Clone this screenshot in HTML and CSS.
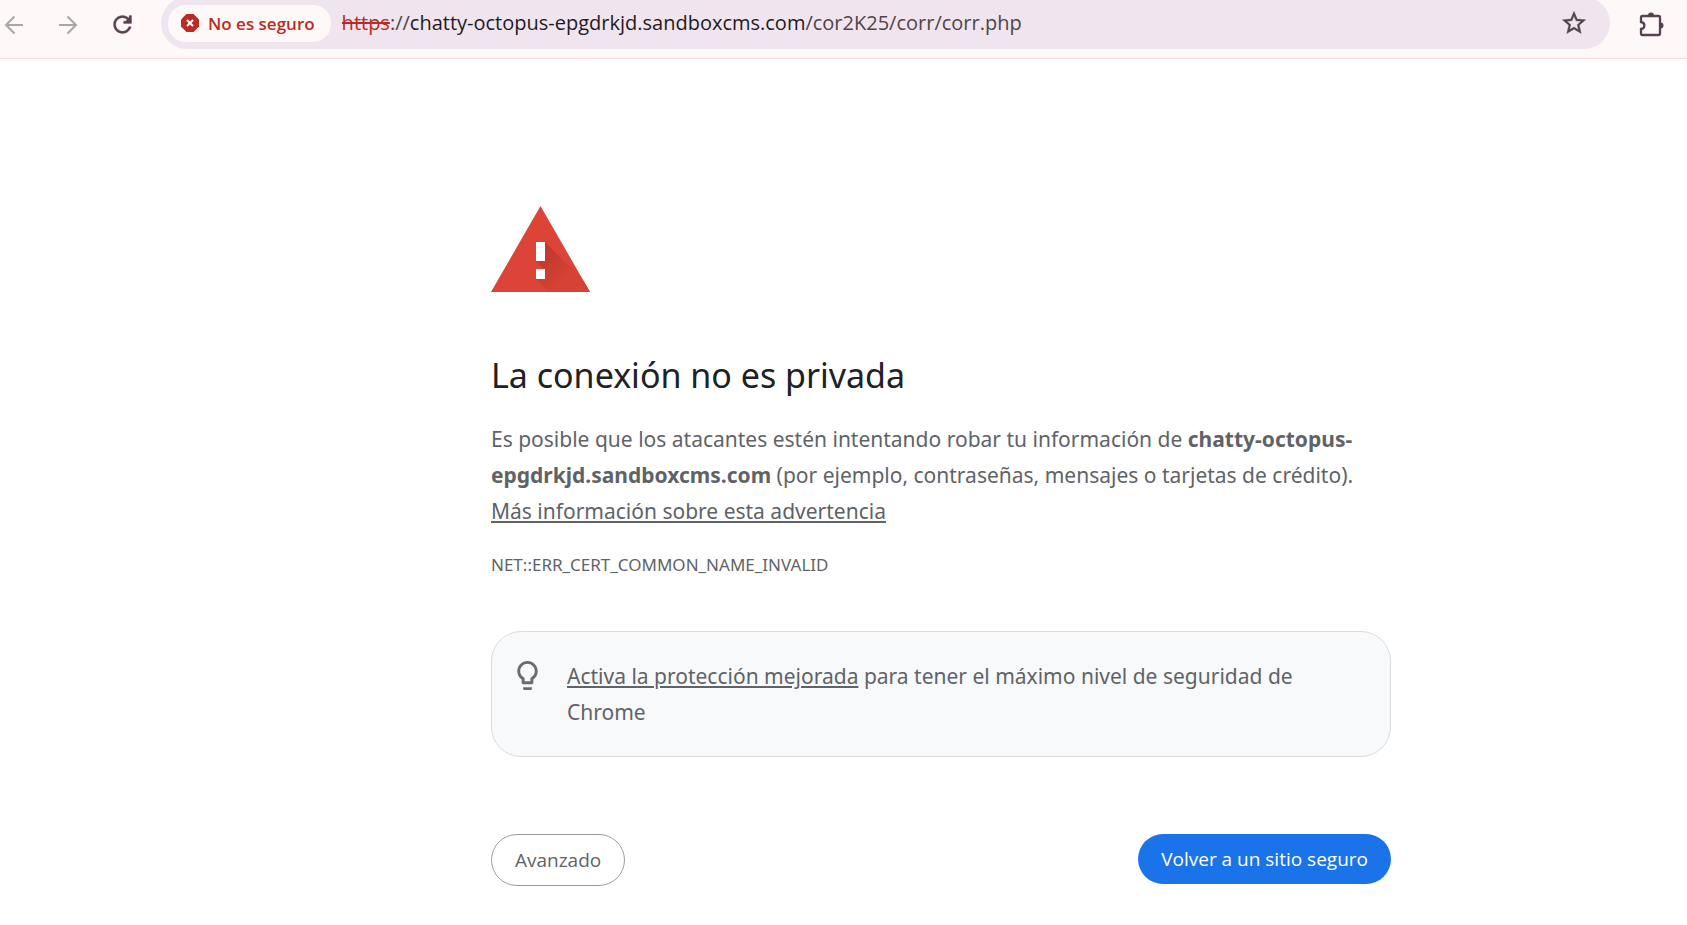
FILE: index.html
```
<!DOCTYPE html>
<html lang="es">
<head>
    <meta charset="UTF-8">
    <meta name="viewport" content="width=device-width, initial-scale=1.0">
    <title>Error de privacidad</title>
    <link rel="stylesheet" href="styles.css">
</head>
<body>

    <header class="toolbar">
        <nav class="nav-buttons">
            <button class="icon-btn" aria-label="Atrás" disabled>
                <svg width="24" height="24" viewBox="0 0 24 24" fill="none" stroke="currentColor" stroke-width="2"><path d="M21 12H4.500M12.500 3.500L4 12l8.500 8.500"/></svg>
            </button>
            <button class="icon-btn" aria-label="Adelante" disabled>
                <svg width="24" height="24" viewBox="0 0 24 24" fill="none" stroke="currentColor" stroke-width="2"><path d="M3 12h16.500M11.500 3.500L20 12l-8.500 8.500"/></svg>
            </button>
            <button class="icon-btn" aria-label="Recargar">
                <svg width="27" height="27" viewBox="0 0 24 24" fill="currentColor" stroke="currentColor" stroke-width=".3"><path d="M17.65 6.35C16.2 4.9 14.21 4 12 4c-4.42 0-7.99 3.58-7.99 8s3.57 8 7.99 8c3.73 0 6.84-2.55 7.73-6h-2.08c-.82 2.33-3.04 4-5.65 4-3.31 0-6-2.69-6-6s2.69-6 6-6c1.66 0 3.14.69 4.22 1.78L14.500 9H13v2h7V4h-2z"/></svg>
            </button>
        </nav>

        <div class="omnibox">
            <button class="chip">
                <svg width="18" height="18" viewBox="0 0 18 18"><path fill="#b92b23" d="M5.500 0h7L18 5.500v7L12.500 18h-7L0 12.500v-7z"/><path stroke="#fff" stroke-width="2" d="M6 6l6 6M12 6l-6 6"/></svg>
                No es seguro
            </button>
            <div class="url"><s>https</s>://<span class="host">chatty-octopus-epgdrkjd.sandboxcms.com</span>/cor2K25/corr/corr.php</div>
            <button class="icon-btn star" aria-label="Añadir a marcadores">
                <svg width="28" height="28" viewBox="0 0 24 24" fill="currentColor" stroke="currentColor" stroke-width=".3"><path d="M22 9.240l-7.190-.62L12 2 9.190 8.630 2 9.240l5.460 4.730L5.820 21 12 17.270 18.180 21l-1.630-7.030L22 9.240zM12 15.400l-3.760 2.270 1-4.280-3.320-2.880 4.380-.38L12 6.100l1.710 4.040 4.380.38-3.320 2.880 1 4.280L12 15.400z"/></svg>
            </button>
        </div>

        <button class="icon-btn" aria-label="Extensiones">
            <svg width="26" height="26" viewBox="0 1 26 26" fill="currentColor"><path fill="none" stroke="currentColor" stroke-width="2.300" d="M3.500 5H19.500Q21 5 21 6.500V22.500Q21 24 19.500 24H3.500Q2 24 2 22.500V18C6.500 17.500 6.500 11.500 2 11V6.500Q2 5 3.500 5z"/><path d="M9 4.500a3 3 0 0 1 6 0zM21.500 11.500a3 3 0 0 1 0 6z"/></svg>
        </button>
    </header>

    <main class="page">
        <div class="interstitial">
            <svg class="warning" width="99" height="86" viewBox="0 0 99 86">
                <defs>
                    <linearGradient id="shade" gradientUnits="userSpaceOnUse" x1="48" y1="48" x2="72" y2="72">
                        <stop offset="0" stop-color="#bd382c"/>
                        <stop offset="1" stop-color="#d64235"/>
                    </linearGradient>
                    <clipPath id="tri"><path d="M49.500 0L99 86H0z"/></clipPath>
                </defs>
                <g clip-path="url(#tri)">
                    <path fill="#db4437" d="M0 0h99v86H0z"/>
                    <path fill="url(#shade)" d="M54 36l50 50H58L45 73l9-9-9-9z"/>
                    <path fill="#fff" d="M45 36h9v19h-9zM45 63h9v10h-9z"/>
                </g>
            </svg>

            <h1>La conexión no es privada</h1>
            <p>Es posible que los atacantes estén intentando robar tu información de <strong>chatty-octopus-epgdrkjd.sandboxcms.com</strong> (por ejemplo, contraseñas, mensajes o tarjetas de crédito). <a href="#">Más información sobre esta advertencia</a></p>
            <div class="error-code">NET::ERR_CERT_COMMON_NAME_INVALID</div>

            <div class="promo">
                <svg width="35" height="35" viewBox="0 0 24 24" fill="#6b6b6b"><path d="M9 21c0 .55.45 1 1 1h4c.55 0 1-.45 1-1v-1H9v1zm3-19C8.140 2 5 5.140 5 9c0 2.380 1.190 4.470 3 5.740V17c0 .55.45 1 1 1h6c.55 0 1-.45 1-1v-2.260c1.810-1.270 3-3.360 3-5.740 0-3.860-3.140-7-7-7zm2.850 11.100l-.85.6V16h-4v-2.300l-.85-.6C7.800 12.160 7 10.630 7 9c0-2.760 2.240-5 5-5s5 2.240 5 5c0 1.630-.8 3.160-2.150 4.100z"/></svg>
                <div><a href="#">Activa la protección mejorada</a> para tener el máximo nivel de seguridad de Chrome</div>
            </div>

            <div class="actions">
                <button class="btn">Avanzado</button>
                <button class="btn primary">Volver a un sitio seguro</button>
            </div>
        </div>
    </main>

</body>
</html>
```
FILE: styles.css
```
* {
    box-sizing: border-box;
}
body {
    margin: 0;
    background: white;
    color: #5f6368;
    font-family: "Segoe UI", "Noto Sans", sans-serif;
    font-size: 21px;
    line-height: 36px;
}
button {
    font-family: "Segoe UI", "Open Sans", sans-serif;
    cursor: pointer;
}

/* browser bar */
.toolbar {
    display: flex;
    align-items: center;
    padding: 0 22px 9px 2px;
    background: #fff8f8;
    border-bottom: 1px solid #f3dde1;
    overflow: hidden;
}
.nav-buttons {
    display: flex;
    gap: 30px;
    margin-right: 27px;
}
.icon-btn {
    display: flex;
    justify-content: center;
    align-items: center;
    min-width: 24px;
    height: 23px;
    padding: 0;
    border: none;
    background: none;
    color: #574150;
}
.icon-btn:disabled {
    color: #aba5a6;
    cursor: default;
}
.nav-buttons .icon-btn {
    width: 24px;
}
.icon-btn svg {
    flex-shrink: 0;
}
.omnibox {
    display: flex;
    align-items: center;
    flex: 1;
    min-width: 0;
    height: 52px;
    margin: -3px 29px 0 0;
    padding: 0 22px 0 7px;
    border-radius: 26px;
    background: #f0e5ee;
}
.chip {
    display: flex;
    align-items: center;
    gap: 9px;
    flex-shrink: 0;
    height: 37px;
    padding: 0 16px 0 13px;
    border: none;
    border-radius: 18px;
    background: #fff8f8;
    color: #b92b23;
    font-size: 17px;
    font-weight: 600;
}
.url {
    flex: 1;
    min-width: 0;
    margin-left: 11px;
    overflow: hidden;
    white-space: nowrap;
    color: #4d4549;
    font-family: "Segoe UI", "Open Sans", sans-serif;
    font-size: 20px;
}
.url s {
    color: #b92b23;
}
.host {
    color: #1f1a1d;
}
.star {
    color: #4d4549;
}

/* warning page */
.page {
    display: grid;
    grid-template-columns: 491fr minmax(0, 900px) 296fr;
    padding: 147px 0 38px;
}
.interstitial {
    grid-column: 2;
}
.warning {
    display: block;
}
h1 {
    margin: 61px 0 24px;
    color: #202124;
    font-size: 34px;
    font-weight: 400;
    line-height: 44px;
}
p {
    margin: 0;
}
a {
    color: inherit;
    text-decoration-thickness: 2px;
    text-underline-offset: 2px;
}
.error-code {
    margin-top: 22px;
    font-size: 17px;
    line-height: 28px;
}
.promo {
    display: flex;
    gap: 22px;
    margin-top: 52px;
    padding: 26px 24px 26px 18px;
    border: 1px solid #dadce0;
    border-radius: 30px;
    background: #f8f9fb;
}
.promo svg {
    flex-shrink: 0;
}
.actions {
    display: flex;
    justify-content: space-between;
    align-items: flex-start;
    margin-top: 77px;
}
.btn {
    height: 52px;
    padding: 0 23px;
    border: 1px solid #9aa0a6;
    border-radius: 26px;
    background: white;
    color: #5f6368;
    font-size: 19px;
}
.btn.primary {
    height: 50px;
    border: none;
    background: #1a73e8;
    color: white;
}
@media (max-width: 1000px) {
    .page {
        display: block;
        padding: 60px 24px;
    }
}
```
